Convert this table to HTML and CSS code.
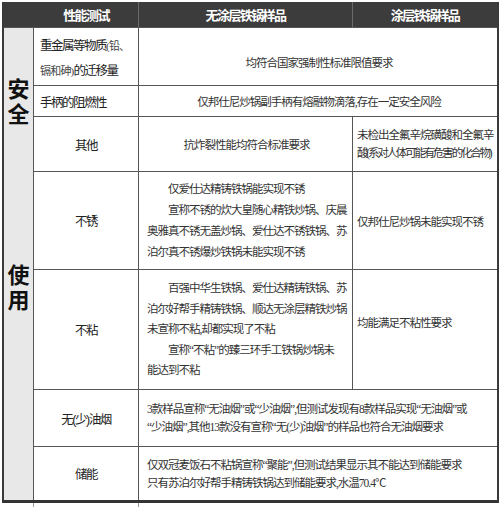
FILE: index.html
```html
<!DOCTYPE html>
<html lang="zh-CN">
<head>
<meta charset="utf-8">
<link rel="stylesheet" href="styles.css">
</head>
<body>
<div class="sheet">
  <div class="th th-first">性能测试</div>
  <div class="th">无涂层铁锅样品</div>
  <div class="th th-last">涂层铁锅样品</div>

  <div class="cat cat-safe"><div class="cat-txt">安全</div></div>
  <div class="cat cat-use"><div class="cat-txt">使用</div></div>

  <div class="cell label left tall"><div>重金属等物质<span class="kai">(铅、</span><br><span class="kai">镉和砷)</span>的迁移量</div></div>
  <div class="cell body span2 center last low">均符合国家强制性标准限值要求</div>

  <div class="cell label left">手柄的阻燃性</div>
  <div class="cell body span2 center last">仅邦仕尼炒锅副手柄有熔融物滴落,存在一定安全风险</div>

  <div class="cell label">其他</div>
  <div class="cell body center">抗炸裂性能均符合标准要求</div>
  <div class="cell body last col3 lh18"><div>未检出全氟辛烷磺酸和全氟辛<br><span class="tight">酸(系对人体可能有危害的化合物)</span></div></div>

  <div class="cell label">不锈</div>
  <div class="cell body lh21">
    <div>
      <p class="para">仅爱仕达精铸铁锅能实现不锈</p>
      <p class="para">宣称不锈的炊大皇随心精铁炒锅、庆晨<br>奥雅真不锈无盖炒锅、爱仕达不锈铁锅、苏<br>泊尔真不锈爆炒铁锅未能实现不锈</p>
    </div>
  </div>
  <div class="cell body last col3">仅邦仕尼炒锅未能实现不锈</div>

  <div class="cell label">不粘</div>
  <div class="cell body lh20">
    <div>
      <p class="para">百强中华生铁锅、爱仕达精铸铁锅、苏<br>泊尔好帮手精铸铁锅、顺达无涂层精铁炒锅<br>未宣称不粘,却都实现了不粘</p>
      <p class="para">宣称“不粘”的臻三环手工铁锅炒锅未<br>能达到不粘</p>
    </div>
  </div>
  <div class="cell body last col3 up">均能满足不粘性要求</div>

  <div class="cell label">无(少)油烟</div>
  <div class="cell body span2 last lh18"><div>3款样品宣称“无油烟”或“少油烟”,但测试发现有8款样品实现“无油烟”或<br>“少油烟”,其他13款没有宣称“无(少)油烟”的样品也符合无油烟要求</div></div>

  <div class="cell label bottom">储能</div>
  <div class="cell body span2 last bottom lh18"><div>仅双冠麦饭石不粘锅宣称“聚能”,但测试结果显示其不能达到储能要求<br>只有苏泊尔好帮手精铸铁锅达到储能要求,水温70.4℃</div></div>
</div>
<div class="tail">
  <div class="tick"></div>
  <div class="tick"></div>
</div>
</body>
</html>
```

FILE: styles.css
```css
html, body {
  margin: 0;
  padding: 0;
  background: #ffffff;
}

.sheet {
  display: grid;
  grid-template-columns: 30px 105px 214px 144px;
  grid-template-rows: 26px 58px 31px 55px 98px 120px 57px 53px;
  width: 493px;
  margin: 2px 0 0 2px;
  border-left: 2px solid #3a3a3a;
  border-right: 2px solid #3a3a3a;
  border-bottom: 3px solid #333333;
}

.th {
  background: #3c3c3c;
  color: #ffffff;
  font-family: "Liberation Sans", "Noto Sans CJK SC", sans-serif;
  font-weight: bold;
  font-size: 13px;
  letter-spacing: -1.6px;
  display: flex;
  align-items: center;
  justify-content: center;
  border-right: 1px solid #6a6a6a;
  border-bottom: 1px solid #555555;
}

.th-first {
  grid-column: 1 / 3;
  padding-left: 30px;
}

.th-last {
  border-right: none;
}

.cat {
  grid-column: 1;
  background: #e8e8e8;
  border-right: 1px solid #555555;
  display: flex;
  flex-direction: column;
  align-items: center;
  font-family: "Noto Sans CJK SC", sans-serif;
  font-weight: bold;
  font-size: 22px;
  color: #111111;
}

.cat-txt {
  writing-mode: vertical-rl;
  text-orientation: upright;
  letter-spacing: 3px;
  line-height: 26px;
}

.cat-safe {
  grid-row: 2 / 5;
  justify-content: center;
  padding-top: 6px;
}

.cat-use {
  grid-row: 5 / 9;
  justify-content: flex-start;
  padding-top: 92px;
}

.cell {
  box-sizing: border-box;
  border-right: 1px solid #555555;
  border-bottom: 1px solid #555555;
  display: flex;
  align-items: center;
}

.last {
  border-right: none;
}

.bottom {
  border-bottom: none;
}

.label {
  font-family: "Liberation Sans", "Noto Sans CJK SC", sans-serif;
  font-size: 12.5px;
  letter-spacing: -1.5px;
  color: #222222;
  justify-content: center;
  white-space: nowrap;
}

.label.left {
  justify-content: flex-start;
  padding-left: 6px;
}

.label.tall {
  line-height: 25px;
  padding-top: 4px;
}

.kai {
  font-family: "Liberation Serif", "Noto Sans CJK SC", serif;
  font-size: 11px;
  letter-spacing: -0.8px;
  color: #444444;
}

.body {
  font-family: "Liberation Serif", "Noto Sans CJK SC", serif;
  font-size: 11.5px;
  letter-spacing: -1px;
  color: #333333;
  padding: 0 6px 0 8px;
  white-space: nowrap;
}

.span2 {
  grid-column: span 2;
}

.center {
  justify-content: center;
}

.low {
  padding-top: 10px;
}

.col3 {
  padding-left: 4px;
  padding-right: 2px;
}

.tight {
  letter-spacing: -2.2px;
}

.up {
  padding-bottom: 16px;
}

.lh18 {
  line-height: 18px;
}

.lh20 {
  line-height: 20.5px;
}

.lh21 {
  line-height: 21px;
}

.para {
  margin: 0;
  text-indent: 21px;
}

.tail {
  display: grid;
  grid-template-columns: 30px 105px;
  height: 4px;
  margin-left: 4px;
}

.tick {
  border-right: 1px solid #9a9a9a;
}
```
